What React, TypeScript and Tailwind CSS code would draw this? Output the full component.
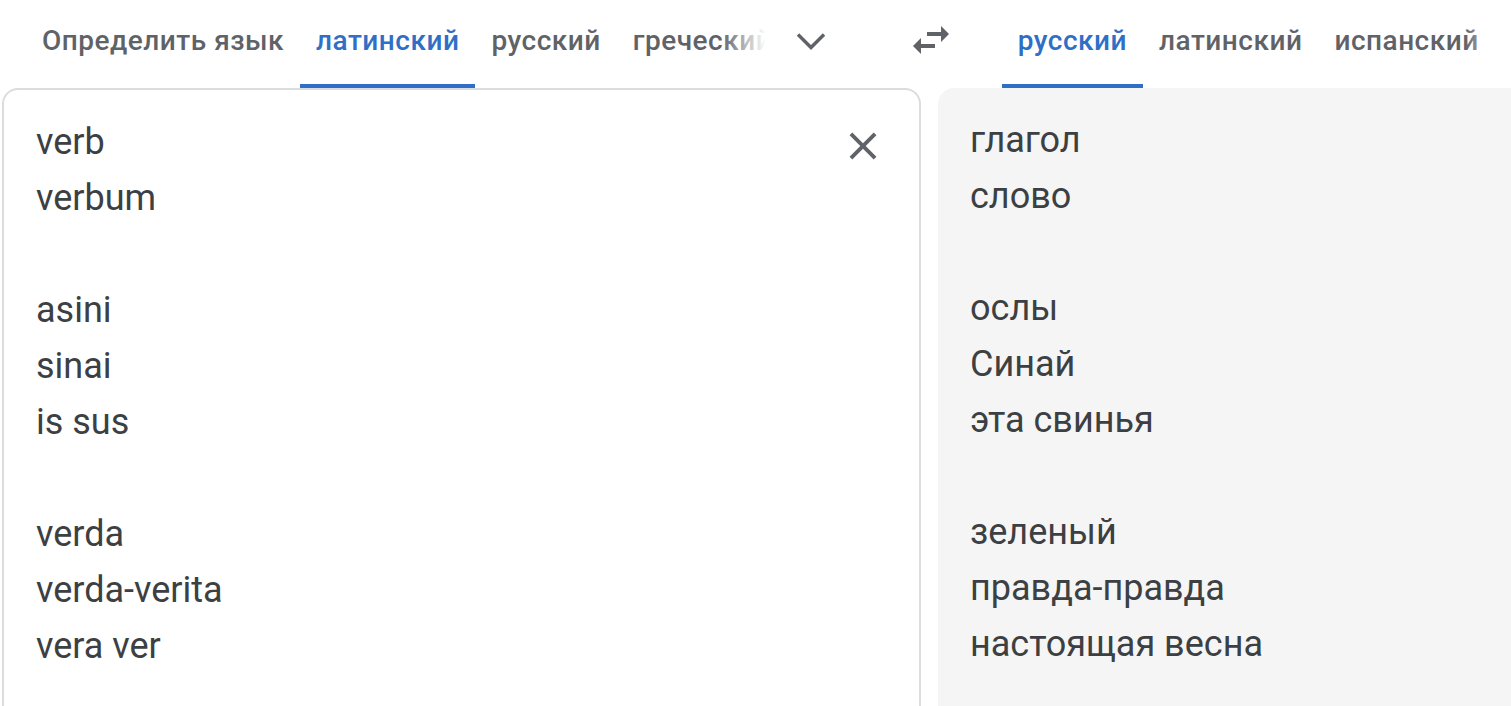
import React from 'react'

const font = { fontFamily: 'Roboto, "Noto Sans", sans-serif' }

const sourceLines = ['verb', 'verbum', '', 'asini', 'sinai', 'is sus', '', 'verda', 'verda-verita', 'vera ver']
const targetLines = ['глагол', 'слово', '', 'ослы', 'Синай', 'эта свинья', '', 'зеленый', 'правда-правда', 'настоящая весна']

function Tab({ label, active }: { label: string; active?: boolean }) {
  return (
    <div
      className={
        'flex h-[88px] shrink-0 items-center whitespace-nowrap border-b-4 px-[16px] pb-[2px] text-[28px] font-medium tracking-[0.5px] ' +
        (active ? 'border-[#2f6fc6] text-[#2f6fc6]' : 'border-transparent text-[#5f6368]')
      }
    >
      {label}
    </div>
  )
}

export default function App() {
  return (
    <div className="h-[706px] w-[1511px] overflow-hidden bg-white" style={font}>
      <div className="flex h-[88px] items-start pl-[26px]">
        <Tab label="Определить язык" />
        <Tab label="латинский" active />
        <Tab label="русский" />
        <div className="relative h-[88px] w-[149px] shrink-0 overflow-hidden">
          <Tab label="греческий" />
          <div className="absolute right-0 top-0 h-[80px] w-[45px] bg-gradient-to-r from-transparent to-white" />
        </div>
        <div className="ml-[30px] mt-[32px] text-[#5f6368]">
          <svg width="30" height="18" viewBox="0 0 30 18" fill="none" stroke="currentColor" strokeWidth="3.4">
            <polyline points="2,2.5 15,15.5 28,2.5" />
          </svg>
        </div>
        <div className="ml-[81px] mt-[16px] text-[#5f6368]">
          <svg width="48" height="48" viewBox="0 0 24 24" fill="currentColor">
            <path d="M6.99 11L3 15l3.99 4v-3H14v-2H6.99v-3zM21 9l-3.99-4v3H10v2h7.01v3L21 9z" />
          </svg>
        </div>
        <div className="relative ml-[47px] flex">
          <Tab label="русский" active />
          <Tab label="латинский" />
          <Tab label="испанский" />
          <div className="absolute right-0 top-0 h-[80px] w-[30px] bg-gradient-to-r from-transparent to-white/70" />
        </div>
      </div>
      <div className="flex items-start">
        <div className="ml-[2px] flex h-[618px] w-[919px] shrink-0 rounded-t-[16px] border-2 border-b-0 border-[#dadce0] pl-[32px] pr-[33px] pt-[24px]">
          <div className="flex-1 text-[36px] leading-[56px] text-[#3c4043]">
            {sourceLines.map((l, i) => (
              <div key={i} className="h-[56px]">
                {l}
              </div>
            ))}
          </div>
          <div className="mt-[9px] text-[#5f6368]">
            <svg width="46" height="46" viewBox="0 0 24 24" fill="currentColor">
              <path d="M19 6.41L17.59 5 12 10.59 6.41 5 5 6.41 10.59 12 5 17.59 6.41 19 12 13.41 17.59 19 19 17.59 13.41 12z" />
            </svg>
          </div>
        </div>
        <div className="ml-[17px] h-[618px] flex-1 rounded-tl-[16px] bg-[#f5f5f5] pl-[32px] pt-[24px] text-[36px] leading-[56px] text-[#3c4043]">
          {targetLines.map((l, i) => (
            <div key={i} className="h-[56px]">
              {l}
            </div>
          ))}
        </div>
      </div>
    </div>
  )
}
